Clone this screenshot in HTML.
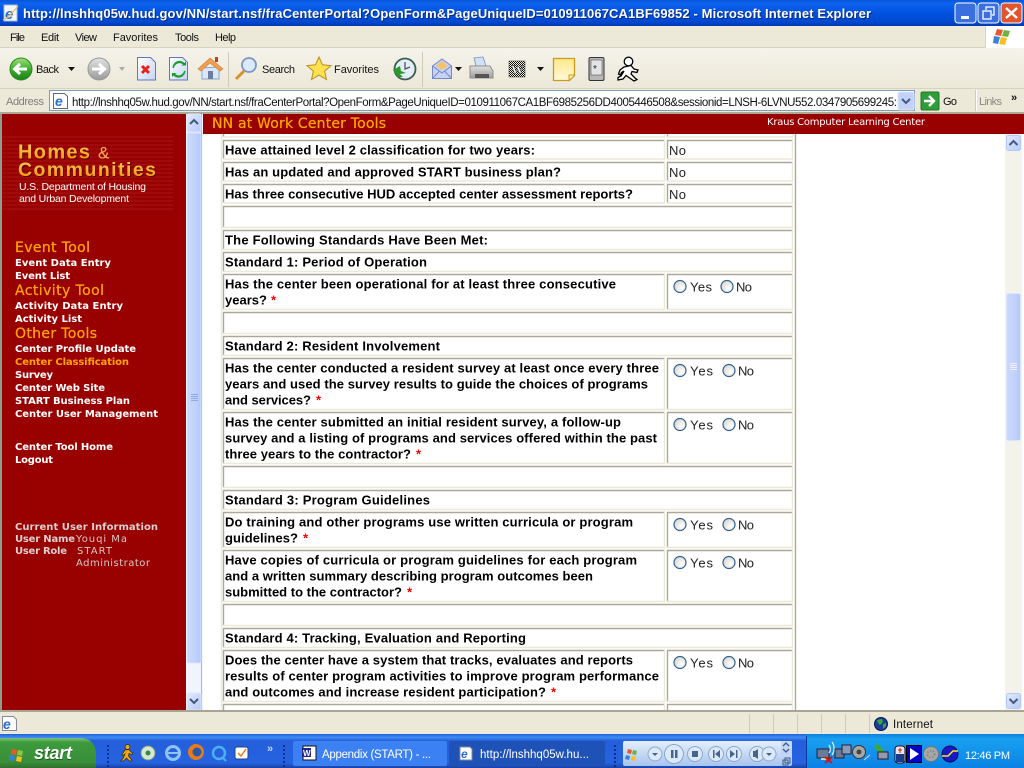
<!DOCTYPE html>
<html><head><meta charset="utf-8"><title>Microsoft Internet Explorer</title>
<style>
html,body{margin:0;padding:0;width:1024px;height:768px;overflow:hidden;background:#ece9d8}
svg{display:block}
text{font-family:"Liberation Sans",Arial,sans-serif;white-space:pre}
.b{font-size:13px;font-weight:bold;fill:#000}
.s{fill:#f00;font-size:13px;font-weight:bold}
.n{font-size:13px;fill:#222}
.m{font-size:11px;fill:#111}
.v{font-family:"DejaVu Sans",Verdana,sans-serif;font-size:10px;font-weight:bold;fill:#fff}
.o{font-family:"DejaVu Sans",Verdana,sans-serif;font-size:14px;fill:#ffa500;stroke:#ffa500;stroke-width:.25}
.g{font-family:"DejaVu Sans",Verdana,sans-serif;font-size:10px;font-weight:bold;fill:#dcd0d0}
.gn{font-family:"DejaVu Sans",Verdana,sans-serif;font-size:10px;fill:#dcc8c8}
.d{fill:none;stroke:#aca899;stroke-width:1.4}
.l{fill:none;stroke:#ece9d8;stroke-width:1.4}
.r{fill:#fff;stroke:#33608f;stroke-width:1.2}
.w{font-size:11.5px;fill:#fff}
</style></head><body>
<svg width="1024" height="768" viewBox="0 0 1024 768" xmlns="http://www.w3.org/2000/svg">
<defs>
<linearGradient id="tb" x1="0" y1="0" x2="0" y2="1"><stop offset="0" stop-color="#0a55d8"/><stop offset=".12" stop-color="#0d62ee"/><stop offset=".5" stop-color="#0052e0"/><stop offset=".85" stop-color="#0148cf"/><stop offset="1" stop-color="#013ab0"/></linearGradient>
<linearGradient id="tk" x1="0" y1="0" x2="0" y2="1"><stop offset="0" stop-color="#1f63d8"/><stop offset=".1" stop-color="#3f8cf3"/><stop offset=".2" stop-color="#245edb"/><stop offset=".85" stop-color="#2663e0"/><stop offset="1" stop-color="#1941a5"/></linearGradient>
<linearGradient id="st" x1="0" y1="0" x2="0" y2="1"><stop offset="0" stop-color="#7fbf7f"/><stop offset=".15" stop-color="#3c9a3c"/><stop offset=".8" stop-color="#3a8f3a"/><stop offset="1" stop-color="#2e6f2e"/></linearGradient>
<linearGradient id="tray" x1="0" y1="0" x2="0" y2="1"><stop offset="0" stop-color="#0f80e0"/><stop offset=".15" stop-color="#18a0f0"/><stop offset="1" stop-color="#0c82e4"/></linearGradient>
<linearGradient id="tool" x1="0" y1="0" x2="0" y2="1"><stop offset="0" stop-color="#f5f3ea"/><stop offset="1" stop-color="#ebe8d8"/></linearGradient>
<linearGradient id="gb" x1="0" y1="0" x2="0" y2="1"><stop offset="0" stop-color="#9fe07a"/><stop offset=".5" stop-color="#3fae2e"/><stop offset="1" stop-color="#1d7f18"/></linearGradient>
<linearGradient id="gy" x1="0" y1="0" x2="0" y2="1"><stop offset="0" stop-color="#e2e2e2"/><stop offset="1" stop-color="#9a9a9a"/></linearGradient>
<linearGradient id="ot" x1="0" y1="0" x2="0" y2="1"><stop offset="0" stop-color="#ffd060"/><stop offset="1" stop-color="#f09000"/></linearGradient>
<linearGradient id="nt" x1="0" y1="0" x2="0" y2="1"><stop offset="0" stop-color="#ffe98a"/><stop offset="1" stop-color="#fff8d8"/></linearGradient>
<linearGradient id="thumb" x1="0" y1="0" x2="1" y2="0"><stop offset="0" stop-color="#c9d8fc"/><stop offset=".5" stop-color="#c3d3fd"/><stop offset="1" stop-color="#b4c8f7"/></linearGradient>
<linearGradient id="btn" x1="0" y1="0" x2="1" y2="1"><stop offset="0" stop-color="#e2ebfe"/><stop offset="1" stop-color="#b6c9f8"/></linearGradient>
<linearGradient id="wmp" x1="0" y1="0" x2="0" y2="1"><stop offset="0" stop-color="#e4effc"/><stop offset="1" stop-color="#a8c4ee"/></linearGradient>
<linearGradient id="doc" x1="0" y1="0" x2="1" y2="1"><stop offset="0" stop-color="#fff"/><stop offset="1" stop-color="#c5d4f5"/></linearGradient>
<radialGradient id="rad" cx=".65" cy=".65" r=".7"><stop offset="0" stop-color="#fff"/><stop offset="1" stop-color="#d8d8d0"/></radialGradient>
<pattern id="stripes" width="4" height="4" patternUnits="userSpaceOnUse"><rect width="4" height="2" fill="#a41414"/></pattern>
<pattern id="chk" width="2" height="2" patternUnits="userSpaceOnUse"><rect width="1" height="1" fill="#111"/><rect x="1" y="1" width="1" height="1" fill="#111"/></pattern>
</defs>

<!-- title bar -->
<rect width="1024" height="26" fill="url(#tb)"/>
<rect x="4" y="5" width="13" height="16" fill="#f4f7ff" stroke="#a8b8d8"/>
<text x="5" y="19" font-size="15" font-weight="bold" font-style="italic" fill="#2a6fd0">e</text>
<path d="M3 20c5-2 11-9 15-14" fill="none" stroke="#f2c14a" stroke-width="1.200"/>
<text x="24" y="19" font-size="13" font-weight="bold" fill="#0a2a80" textLength="848">http://lnshhq05w.hud.gov/NN/start.nsf/fraCenterPortal?OpenForm&amp;PageUniqueID=010911067CA1BF69852 - Microsoft Internet Explorer</text>
<text x="23" y="18" font-size="13" font-weight="bold" fill="#fff" textLength="848">http://lnshhq05w.hud.gov/NN/start.nsf/fraCenterPortal?OpenForm&amp;PageUniqueID=010911067CA1BF69852 - Microsoft Internet Explorer</text>
<rect x="955" y="3" width="21" height="20" rx="3" fill="#3a6fe0" stroke="#fff"/><rect x="961" y="16" width="8" height="3" fill="#fff"/>
<rect x="978" y="3" width="21" height="20" rx="3" fill="#3a6fe0" stroke="#fff"/><rect x="983" y="11" width="8" height="8" fill="none" stroke="#fff" stroke-width="1.300"/><path d="M986 10V7h8v8h-2" fill="none" stroke="#fff" stroke-width="1.300"/>
<rect x="1001" y="3" width="21" height="20" rx="3" fill="#e0552e" stroke="#fff"/><path d="M1006 8l11 10M1017 8l-11 10" stroke="#fff" stroke-width="2.400"/>

<!-- menu bar -->
<rect y="26" width="1024" height="22" fill="#ece9d8"/>
<rect y="47" width="1024" height="1" fill="#d8d4c2"/>
<text class="m" x="10" y="41" textLength="15">File</text>
<text class="m" x="41" y="41" textLength="18">Edit</text>
<text class="m" x="75" y="41" textLength="22">View</text>
<text class="m" x="113" y="41" textLength="45">Favorites</text>
<text class="m" x="175" y="41" textLength="24">Tools</text>
<text class="m" x="215" y="41" textLength="21">Help</text>
<rect x="985" y="26" width="39" height="22" fill="#fff"/><rect x="985" y="26" width="1" height="22" fill="#d8d4c2"/>
<path d="M997 29l6 1-2 6-6-1z" fill="#e8582a"/><path d="M1004 30l6 1-2 6-6-1z" fill="#6cb33f"/><path d="M994 36l6 1-2 7-5-1z" fill="#3a7fd8"/><path d="M1001 37l6 1-2 7-6-1z" fill="#f6c020"/>

<!-- toolbar -->
<rect y="48" width="1024" height="41" fill="url(#tool)"/>
<rect y="88" width="1024" height="1" fill="#d8d4c2"/>
<circle cx="21" cy="69" r="11" fill="url(#gb)" stroke="#2a8a20"/>
<path d="M27 69H15m5-5l-5.500 5 5.500 5" fill="none" stroke="#fff" stroke-width="3"/>
<text class="m" x="36" y="73" textLength="23">Back</text>
<path d="M68 67h7l-3.500 4z" fill="#111"/>
<circle cx="99" cy="69" r="11" fill="url(#gy)" stroke="#999"/>
<path d="M92 69h12m-5-5l5.500 5-5.500 5" fill="none" stroke="#fff" stroke-width="3"/>
<path d="M119 67h6l-3 4z" fill="#aaa"/>
<path d="M137.500 57.500h13l5 5v17.500h-18z" fill="url(#doc)" stroke="#6676b8"/>
<path d="M142 66l7 7m0-7l-7 7" stroke="#e82020" stroke-width="3"/>
<path d="M169.500 57.500h13l5 5v17.500h-18z" fill="url(#doc)" stroke="#6676b8"/>
<path d="M174 68a5.500 5.500 0 0 1 9-3.500l-2 1h5v-4l-1.500 1.500a7 7 0 0 0-12 5zM184 71a5.500 5.500 0 0 1-9 3l2-1h-5v4l1.500-1.500a7 7 0 0 0 12-5z" fill="#1c9c2c"/>
<path d="M202 68v11h17V67z" fill="#dce8f8" stroke="#8aa4cc"/>
<path d="M198 69l12-11 13 11-3 2-10-8-9 8z" fill="#f0a050" stroke="#d07a30" stroke-width=".6"/>
<rect x="208" y="71" width="5" height="8" fill="#6a7ca8"/><rect x="215" y="57" width="3" height="5" fill="#c04020"/>
<rect x="228" y="52" width="1" height="35" fill="#cfcbb8"/>
<circle cx="249" cy="65" r="7" fill="#dbe9fb" stroke="#7c97c0" stroke-width="1.800"/>
<path d="M244 71l-8 8" stroke="#d8902c" stroke-width="3"/>
<text class="m" x="262" y="73" textLength="33">Search</text>
<path d="M319 57l3.500 7.800 8.500.8-6.400 5.600 1.900 8.300-7.500-4.400-7.500 4.400 1.900-8.300-6.400-5.600 8.500-.8z" fill="#ffe050" stroke="#b89018"/>
<text class="m" x="334" y="73" textLength="45">Favorites</text>
<circle cx="405" cy="69" r="10.500" fill="#e4eef8" stroke="#3c5c50" stroke-width="1.800"/>
<path d="M405 62v7l5-2" fill="none" stroke="#555" stroke-width="1.300"/>
<path d="M393 70l5 7h5l-3-3 6-1-5-2-1-5z" fill="#2a9a2a"/>
<rect x="422" y="52" width="1" height="35" fill="#cfcbb8"/>
<path d="M432.500 66l9.500-7 9.500 7v12.500h-19z" fill="#c7d3f5" stroke="#7887c8"/>
<path d="M436 66l6-5 6 5-6 4z" fill="#f4c46c"/>
<path d="M432.500 66l9.500 7 9.500-7M432.500 78.500l7-7.500M451.500 78.500l-7-7.500" fill="none" stroke="#7887c8"/>
<path d="M455 67h7l-3.500 4z" fill="#111"/>
<path d="M474 58l9-1 3 9h-10z" fill="#cfe0f8" stroke="#8aa0c0"/>
<path d="M470 66h20l3 5v7h-23z" fill="url(#gy)" stroke="#8d8d8d"/>
<rect x="475" y="74" width="14" height="4" fill="#555"/>
<rect x="509" y="61" width="16" height="16" fill="url(#chk)" stroke="#333" stroke-width=".5"/>
<text x="511" y="74" font-size="13" font-weight="bold" style="font-family:'Liberation Serif',serif" fill="#fff" stroke="#111" stroke-width=".4">W</text>
<path d="M537 67h7l-3.500 4z" fill="#111"/>
<path d="M553.500 58.500h21v17l-5 5h-16z" fill="url(#nt)" stroke="#cc9a1c" stroke-width="1.300"/>
<path d="M569 80v-5h5" fill="#fff3b0" stroke="#cc9a1c"/>
<rect x="589" y="57.500" width="15" height="23" rx="1.500" fill="#b8b8b8" stroke="#333"/>
<rect x="591" y="60" width="11" height="15" fill="#e4e4e4" stroke="#555" stroke-width=".6"/>
<text x="593" y="72" font-size="10" fill="#222">*</text>
<circle cx="628.500" cy="61.500" r="4.300" fill="#fff" stroke="#000" stroke-width="1.300"/>
<path d="M624 67L631 65.500 634 69 638 70 637 72.500 632 71.500 631 74 635 78 637 79.500 634 81 629 77.500 626 75.500 623 79 618 80 618 77.500 621 76 624 71 621.500 72.500 620.500 75 618.500 74 620 70Z" fill="#fff" stroke="#000" stroke-width="1.300"/>

<!-- address bar -->
<rect y="89" width="1024" height="23" fill="#ece9d8"/>
<text x="6" y="105" font-size="11" fill="#7f7f7f" textLength="38">Address</text>
<rect x="49.500" y="90.500" width="865" height="20" fill="#fff" stroke="#7f9db9"/>
<path d="M53.500 93.500h11l3 3v12h-14z" fill="#fff" stroke="#667"/>
<text x="55" y="106" font-size="14" font-weight="bold" font-style="italic" fill="#2a6fd0">e</text>
<svg x="72" y="92" width="825" height="18"><text x="0" y="14" font-size="11.500" fill="#111" textLength="825">http://lnshhq05w.hud.gov/NN/start.nsf/fraCenterPortal?OpenForm&amp;PageUniqueID=010911067CA1BF6985256DD4005446508&amp;sessionid=LNSH-6LVNU552.0347905699245:</text></svg>
<rect x="898" y="92" width="16" height="18" rx="2" fill="#c2d2f8" stroke="#dfe8fd"/>
<path d="M902 99l4 4 4-4" fill="none" stroke="#44597f" stroke-width="2"/>
<rect x="921" y="92" width="18" height="18" rx="1.500" fill="#2f9d3a" stroke="#1a7a22"/>
<path d="M924 101h9m-4-5l5 5-5 5" fill="none" stroke="#fff" stroke-width="2.400"/>
<text class="m" x="943" y="105" textLength="14">Go</text>
<rect x="976" y="90" width="1" height="21" fill="#fff"/><rect x="975" y="90" width="1" height="21" fill="#cfcbb8"/>
<text x="979" y="105" font-size="11" fill="#8a8a80" textLength="23">Links</text>
<text x="1011" y="101" font-size="11" font-weight="bold" fill="#111">»</text>

<!-- content -->
<rect y="112" width="1024" height="2" fill="#aca899"/>
<rect y="114" width="1024" height="597" fill="#fff"/>
<rect y="114" width="2" height="597" fill="#8f9c8f"/>
<rect x="2" y="114" width="184" height="597" fill="#990000"/>

<!-- logo -->
<rect x="2" y="134" width="171" height="76" fill="url(#stripes)" opacity=".55"/>
<text x="19" y="159.500" font-size="20" font-weight="bold" fill="#5c0000" textLength="72">Homes</text>
<text x="18" y="158.500" font-size="20" font-weight="bold" fill="url(#ot)" textLength="72">Homes</text>
<text x="98" y="158.500" font-size="17" fill="#fbb45a">&amp;</text>
<text x="19" y="177" font-size="19.500" font-weight="bold" fill="#5c0000" textLength="138">Communities</text>
<text x="18" y="176" font-size="19.500" font-weight="bold" fill="url(#ot)" textLength="138">Communities</text>
<text x="19" y="190" font-size="10.500" fill="#fff" textLength="127">U.S. Department of Housing</text>
<text x="19" y="202" font-size="10.500" fill="#fff" textLength="110">and Urban Development</text>

<!-- left nav -->
<text class="o" x="15" y="252" textLength="75">Event Tool</text>
<text class="v" x="15" y="266" textLength="96">Event Data Entry</text>
<text class="v" x="15" y="279" textLength="55">Event List</text>
<text class="o" x="15" y="295" textLength="89">Activity Tool</text>
<text class="v" x="15" y="309" textLength="108">Activity Data Entry</text>
<text class="v" x="15" y="322" textLength="67">Activity List</text>
<text class="o" x="15" y="338" textLength="82">Other Tools</text>
<text class="v" x="15" y="352" textLength="121">Center Profile Update</text>
<text class="v" x="15" y="365" textLength="114" style="fill:#ffa500">Center Classification</text>
<text class="v" x="15" y="378" textLength="38">Survey</text>
<text class="v" x="15" y="391" textLength="90">Center Web Site</text>
<text class="v" x="15" y="404" textLength="115">START Business Plan</text>
<text class="v" x="15" y="417" textLength="143">Center User Management</text>
<text class="v" x="15" y="450" textLength="98">Center Tool Home</text>
<text class="v" x="15" y="463" textLength="38">Logout</text>
<text class="g" x="15" y="530" textLength="143">Current User Information</text>
<text class="g" x="15" y="542" textLength="60">User Name</text>
<text class="gn" x="76" y="542" textLength="51">Youqi Ma</text>
<text class="g" x="15" y="554" textLength="52">User Role</text>
<text class="gn" x="77" y="554" textLength="35">START</text>
<text class="gn" x="76" y="566" textLength="74">Administrator</text>

<!-- left scrollbar -->
<rect x="186" y="114" width="17" height="597" fill="#f1f4fd"/>
<rect x="186" y="114" width="1" height="597" fill="#fff"/>
<rect x="201" y="114" width="1" height="597" fill="#a9b8d4"/>
<rect x="187" y="114" width="14" height="18" rx="2" fill="url(#btn)" stroke="#dbe5fd"/>
<path d="M190 124l4-4 4 4" fill="none" stroke="#44597f" stroke-width="2"/>
<rect x="187" y="133" width="14" height="530" rx="2" fill="url(#thumb)" stroke="#dbe5fd" stroke-width=".8"/>
<path d="M191 394.500h7M191 396.500h7M191 398.500h7M191 400.500h7" stroke="#8fa8e6"/>
<rect x="187" y="693" width="14" height="17" rx="2" fill="url(#btn)" stroke="#dbe5fd"/>
<path d="M190 699l4 4 4-4" fill="none" stroke="#44597f" stroke-width="2"/>

<!-- top frame -->
<rect x="203" y="114" width="821" height="20" fill="#990000"/>
<text class="o" x="212" y="128" textLength="174">NN at Work Center Tools</text>
<text x="767" y="125" fill="#fff" font-size="10" textLength="158" style="font-family:'DejaVu Sans',sans-serif">Kraus Computer Learning Center</text>

<!-- table outer -->
<path d="M221.500 134V711" stroke="#ece9d8" stroke-width="1.600" fill="none"/>
<path d="M795.500 134V711" stroke="#aca899" stroke-width="1.400" fill="none"/>

<!-- cell borders -->
<path class="d" d="M223.500 134v3M667.500 134v3"/>
<path class="l" d="M223 137H665M667 137H793M664.500 134v3M793 134v3"/>
<path class="d" d="M223.500 159V140.500H665M667.500 159V140.500H793M223.500 181V162.500H665M667.500 181V162.500H793M223.500 203V184.500H665M667.500 203V184.500H793M223.500 228V206.500H793M223.500 250V230.500H793M223.500 272V252.500H793M223.500 310V274.500H665M667.500 310V274.500H793M223.500 334V312.500H793M223.500 356V336.500H793M223.500 410V358.500H665M667.500 410V358.500H793M223.500 464V412.500H665M667.500 464V412.500H793M223.500 488V466.500H793M223.500 510V490.500H793M223.500 548V512.500H665M667.500 548V512.500H793M223.500 602V550.500H665M667.500 602V550.500H793M223.500 626V604.500H793M223.500 648V628.500H793M223.500 702V650.500H665M667.500 702V650.500H793M223.500 711V704.500H665M667.500 711V704.500H793"/>
<path class="l" d="M664.500 140V159H223M792.500 140V159H667M664.500 162V181H223M792.500 162V181H667M664.500 184V203H223M792.500 184V203H667M792.500 206V227.500H223M792.500 230V249.500H223M792.500 252V271.500H223M664.500 274V309.500H223M792.500 274V309.500H667M792.500 312V333.500H223M792.500 336V355.500H223M664.500 358V409.500H223M792.500 358V409.500H667M664.500 412V463.500H223M792.500 412V463.500H667M792.500 466V487.500H223M792.500 490V509.500H223M664.500 512V547.500H223M792.500 512V547.500H667M664.500 550V601.500H223M792.500 550V601.500H667M792.500 604V625.500H223M792.500 628V647.500H223M664.500 650V701.500H223M792.500 650V701.500H667M664.500 704V711M792.500 704V711"/>

<!-- table text -->
<text class="b" x="225" y="154.500" textLength="310">Have attained level 2 classification for two years:</text>
<text class="n" x="669" y="155" textLength="17">No</text>
<text class="b" x="225" y="176.500" textLength="336">Has an updated and approved START business plan?</text>
<text class="n" x="669" y="177" textLength="17">No</text>
<text class="b" x="225" y="198.500" textLength="408">Has three consecutive HUD accepted center assessment reports?</text>
<text class="n" x="669" y="199" textLength="17">No</text>
<text class="b" x="225" y="244.500" textLength="263">The Following Standards Have Been Met:</text>
<text class="b" x="225" y="266.500" textLength="202">Standard 1: Period of Operation</text>
<text class="b" x="225" y="288.500" textLength="391">Has the center been operational for at least three consecutive</text>
<text class="b" x="225" y="304.500" textLength="42">years?</text><text class="s" x="271" y="304.500">*</text>
<text class="b" x="225" y="350.500" textLength="215">Standard 2: Resident Involvement</text>
<text class="b" x="225" y="372.500" textLength="434">Has the center conducted a resident survey at least once every three</text>
<text class="b" x="225" y="388.500" textLength="423">years and used the survey results to guide the choices of programs</text>
<text class="b" x="225" y="404.500" textLength="86">and services?</text><text class="s" x="316" y="404.500">*</text>
<text class="b" x="225" y="426.500" textLength="396">Has the center submitted an initial resident survey, a follow-up</text>
<text class="b" x="225" y="442.500" textLength="432">survey and a listing of programs and services offered within the past</text>
<text class="b" x="225" y="458.500" textLength="186">three years to the contractor?</text><text class="s" x="416" y="458.500">*</text>
<text class="b" x="225" y="504.500" textLength="205">Standard 3: Program Guidelines</text>
<text class="b" x="225" y="526.500" textLength="408">Do training and other programs use written curricula or program</text>
<text class="b" x="225" y="542.500" textLength="73">guidelines?</text><text class="s" x="303" y="542.500">*</text>
<text class="b" x="225" y="564.500" textLength="412">Have copies of curricula or program guidelines for each program</text>
<text class="b" x="225" y="580.500" textLength="368">and a written summary describing program outcomes been</text>
<text class="b" x="225" y="596.500" textLength="177">submitted to the contractor?</text><text class="s" x="407" y="596.500">*</text>
<text class="b" x="225" y="642.500" textLength="301">Standard 4: Tracking, Evaluation and Reporting</text>
<text class="b" x="225" y="664.500" textLength="408">Does the center have a system that tracks, evaluates and reports</text>
<text class="b" x="225" y="680.500" textLength="434">results of center program activities to improve program performance</text>
<text class="b" x="225" y="696.500" textLength="321">and outcomes and increase resident participation?</text><text class="s" x="551" y="696.500">*</text>

<!-- radios -->
<circle class="r" cx="680" cy="286.500" r="6" style="fill:url(#rad)"/><text class="n" x="690" y="291.500" textLength="22">Yes</text>
<circle class="r" cx="727" cy="286.500" r="6" style="fill:url(#rad)"/><text class="n" x="736" y="291.500" textLength="16">No</text>
<circle class="r" cx="680" cy="370.500" r="6" style="fill:url(#rad)"/><text class="n" x="690" y="375.500" textLength="23">Yes</text>
<circle class="r" cx="729" cy="370.500" r="6" style="fill:url(#rad)"/><text class="n" x="738" y="375.500" textLength="16">No</text>
<circle class="r" cx="680" cy="424.500" r="6" style="fill:url(#rad)"/><text class="n" x="690" y="429.500" textLength="23">Yes</text>
<circle class="r" cx="729" cy="424.500" r="6" style="fill:url(#rad)"/><text class="n" x="738" y="429.500" textLength="16">No</text>
<circle class="r" cx="680" cy="524.500" r="6" style="fill:url(#rad)"/><text class="n" x="690" y="529.500" textLength="23">Yes</text>
<circle class="r" cx="729" cy="524.500" r="6" style="fill:url(#rad)"/><text class="n" x="738" y="529.500" textLength="16">No</text>
<circle class="r" cx="680" cy="562.500" r="6" style="fill:url(#rad)"/><text class="n" x="690" y="567.500" textLength="23">Yes</text>
<circle class="r" cx="729" cy="562.500" r="6" style="fill:url(#rad)"/><text class="n" x="738" y="567.500" textLength="16">No</text>
<circle class="r" cx="680" cy="662.500" r="6" style="fill:url(#rad)"/><text class="n" x="690" y="667.500" textLength="23">Yes</text>
<circle class="r" cx="729" cy="662.500" r="6" style="fill:url(#rad)"/><text class="n" x="738" y="667.500" textLength="16">No</text>

<!-- right scrollbar -->
<rect x="1005" y="134" width="17" height="577" fill="#f3f3ec"/>
<rect x="1022" y="114" width="2" height="597" fill="#fff"/>
<rect x="1022" y="114" width="2" height="20" fill="#990000"/>
<rect x="1006.500" y="135.500" width="14" height="15" rx="2" fill="url(#btn)" stroke="#b6c9f8"/>
<path d="M1009.500 145l4-4 4 4" fill="none" stroke="#44597f" stroke-width="2"/>
<rect x="1006.500" y="293.500" width="14" height="147" rx="2" fill="url(#thumb)" stroke="#dbe5fd"/>
<path d="M1010 363.500h7M1010 365.500h7M1010 367.500h7M1010 369.500h7" stroke="#eef3ff"/>
<rect x="1006.500" y="693.500" width="14" height="15" rx="2" fill="url(#btn)" stroke="#b6c9f8"/>
<path d="M1009.500 699l4 4 4-4" fill="none" stroke="#44597f" stroke-width="2"/>

<!-- status bar -->
<rect y="710" width="1024" height="2" fill="#a8a597"/>
<rect y="712" width="1024" height="22" fill="#ece9d8"/>
<path d="M2.500 716.500h11l3 3v11h-14z" fill="#fff" stroke="#889"/>
<text x="3" y="729" font-size="14" font-weight="bold" font-style="italic" fill="#2a6fd0">e</text>
<path d="M749.500 714v19M773.500 714v19M797.500 714v19M821.500 714v19M845.500 714v19M869.500 714v19" stroke="#cfcbb8"/>
<circle cx="881" cy="724" r="6.500" fill="#1c3c9c" stroke="#0a1a50"/>
<path d="M877 720l5-1 1 3-3 3-2-2zM883 724l3-1 0 3-3 3z" fill="#38a838"/>
<text x="893" y="728" font-size="11.500" fill="#111" textLength="40">Internet</text>

<!-- taskbar -->
<rect y="734" width="1024" height="34" fill="url(#tk)"/>
<path d="M0 738H80q14 0 16 14v16H0z" fill="url(#st)"/>
<path d="M12 749l5 1-1 5-5-1z" fill="#e8582a"/><path d="M18 750l5 1-1 5-5-1z" fill="#8cc63f"/><path d="M10 755l5 1-1 5-5-1z" fill="#3a7fd8"/><path d="M17 756l5 1-1 5-5-1z" fill="#f6c020"/>
<text x="35" y="760" font-size="18" font-weight="bold" font-style="italic" fill="#1d5a1d" textLength="37">start</text>
<text x="34" y="759" font-size="18" font-weight="bold" font-style="italic" fill="#fff" textLength="38">start</text>
<path d="M108 745v22M284 745v22M615 745v22" stroke="#0e2e90" stroke-width="2" stroke-dasharray="2 2"/>
<circle cx="127.500" cy="747" r="2.500" fill="#f0a818" stroke="#3a2a00" stroke-width=".7"/>
<path d="M125 750L129 749.500 131 752 133 753 132 754.500 129 753.500 128.500 756 131 759 132 761 129.500 761 126.500 758 123.500 761 120.500 761 123 758.500 125 754 123 755.500 122 754.500Z" fill="#f0a818" stroke="#3a2a00" stroke-width=".7"/>
<circle cx="148" cy="753" r="7" fill="#d8e8d8" stroke="#7aa07a"/><circle cx="148" cy="753" r="2.500" fill="#3a8a3a"/>
<circle cx="173" cy="753" r="6.500" fill="none" stroke="#8fc4f5" stroke-width="3"/><path d="M167 753h12" stroke="#8fc4f5" stroke-width="2"/>
<circle cx="196" cy="752" r="8" fill="#e87a18"/><circle cx="197" cy="752" r="4.500" fill="#2a58a8"/>
<circle cx="219" cy="753" r="6" fill="none" stroke="#4ab0f0" stroke-width="2.500"/><path d="M222 757l4 4" stroke="#4ab0f0" stroke-width="2"/>
<rect x="235" y="747" width="13" height="12" rx="2" fill="#fff" stroke="#20408c"/><path d="M238 753l3 3 5-7" fill="none" stroke="#f07818" stroke-width="1.500"/>
<text x="267" y="752" font-size="11" font-weight="bold" fill="#c8d8f8">»</text>
<rect x="293" y="741" width="154" height="25" rx="2" fill="#3c81f3"/>
<rect x="303" y="746" width="13" height="14" fill="#fff" stroke="#111"/><rect x="302" y="748" width="9" height="9" fill="#23238c"/><text x="303" y="756" font-size="8" font-weight="bold" fill="#fff">W</text>
<text class="w" x="322" y="758" textLength="109">Appendix (START) - ...</text>
<rect x="449" y="741" width="156" height="25" rx="2" fill="#1e52b7"/>
<path d="M460 747h10l2 2v11h-12z" fill="#fff" stroke="#889"/><text x="461" y="758" font-size="12" font-weight="bold" font-style="italic" fill="#2a6fd0">e</text>
<text class="w" x="480" y="758" textLength="109">http://lnshhq05w.hu...</text>
<rect x="623" y="741" width="169" height="25" rx="2" fill="url(#wmp)"/>
<path d="M628 749l4 1-1 4-4-1z" fill="#e8582a"/><path d="M633 750l4 1-1 4-4-1z" fill="#6cb33f"/><path d="M626 755l4 1-1 4-4-1z" fill="#3a7fd8"/><path d="M632 756l4 1-1 4-4-1z" fill="#f6c020"/>
<g fill="#dbe8f8" stroke="#8ba8cf">
<circle cx="655" cy="754" r="7"/><circle cx="674" cy="754" r="9.500"/><circle cx="695" cy="754" r="7.500"/><circle cx="716" cy="754" r="7.500"/><circle cx="734" cy="754" r="7.500"/><circle cx="757" cy="754" r="7.500"/><circle cx="769" cy="754" r="7"/>
</g>
<g fill="#46648c">
<path d="M652 753h6l-3 3z"/><rect x="671" y="750" width="2.500" height="8"/><rect x="675" y="750" width="2.500" height="8"/><rect x="692" y="751" width="6" height="6"/>
<path d="M720 750v8l-5-4zM713 750h1.500v8H713zM730 750v8l5-4zM736 750h1.500v8H736zM753 751h2l3-2v10l-3-2h-2zM766 753h6l-3 3z"/>
</g>
<rect x="781" y="741" width="11" height="13" fill="#b7cdee" opacity=".6"/>
<path d="M783 746l3-3 3 3M783 749l3 3 3-3" fill="none" stroke="#3a5a8c" stroke-width="1.300"/>
<rect x="785" y="758" width="5" height="5" fill="none" stroke="#3a5a8c"/><rect x="783" y="760" width="5" height="5" fill="none" stroke="#3a5a8c"/>
<rect x="806" y="734" width="218" height="34" fill="url(#tray)"/>
<rect x="806" y="736" width="1" height="32" fill="#0a3a9a"/>
<!-- tray icons -->
<rect x="817" y="749" width="12" height="9" fill="#6a7a9a" stroke="#223"/><rect x="821" y="758" width="6" height="2" fill="#ccc"/>
<path d="M829 745a7 7 0 0 1 0 8M832 742a11 11 0 0 1 0 13" fill="none" stroke="#e8eef8" stroke-width="1.300"/>
<path d="M825 757l7 6m0-6l-7 6" stroke="#e01010" stroke-width="2"/>
<rect x="835" y="749" width="9" height="9" fill="#6a7a9a" stroke="#223"/><rect x="842" y="745" width="9" height="9" fill="#8a9aba" stroke="#223"/>
<circle cx="859" cy="752" r="6.500" fill="#a8a8a8" stroke="#333"/><circle cx="859" cy="752" r="2.500" fill="#444"/>
<path d="M864 760l6-5" stroke="#cfd8f0"/>
<path d="M874 747l5-4 2 5 4 2-6 3z" fill="#3ca83c"/><rect x="878" y="752" width="10" height="7" fill="#99a" stroke="#223"/>
<rect x="895" y="746" width="10" height="17" rx="3" fill="#e8e8f0" stroke="#112"/><rect x="896" y="754" width="8" height="8" fill="#1a3a8c"/><path d="M900 748v5M898 750h4" stroke="#e01010"/>
<rect x="906.500" y="745.500" width="15" height="17" fill="#0000c8" stroke="#000"/>
<path d="M910 748v12l9-6z" fill="#fff"/>
<circle cx="931" cy="754" r="7.500" fill="#a8a8a8" stroke="#777"/><circle cx="931" cy="754" r="3.500" fill="none" stroke="#888" stroke-dasharray="1.500 1.500" stroke-width="2"/>
<circle cx="950" cy="754" r="8" fill="#1818c8" stroke="#001060"/>
<path d="M942 756h6l5-5h5" fill="none" stroke="#ffe820" stroke-width="1.500"/>
<text x="965" y="759" font-size="11" fill="#fff" textLength="45">12:46 PM</text>
</svg>
</body></html>
